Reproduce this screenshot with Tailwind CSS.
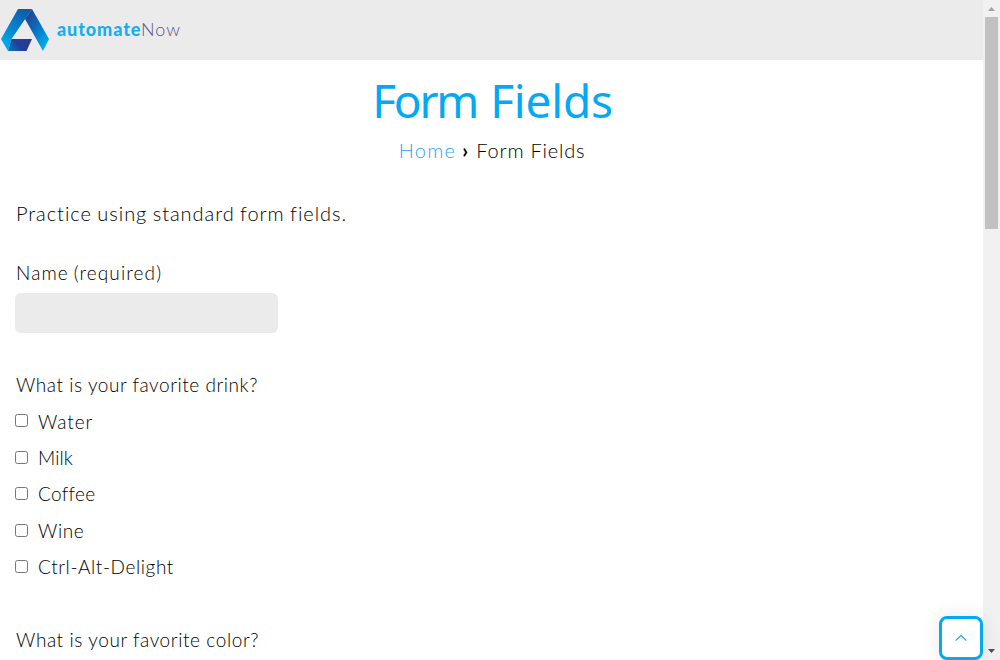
<!DOCTYPE html>
<html lang="en">
<head>
<meta charset="utf-8">
<title>Form Fields</title>
<script src="https://cdn.jsdelivr.net/npm/@tailwindcss/browser@4"></script>
</head>
<body class="flex h-[660px] w-[1000px] overflow-hidden bg-white font-['Lato',sans-serif] font-light text-black">
<div class="flex min-w-0 flex-1 flex-col">
  <header class="flex h-[60px] shrink-0 items-center bg-[#ebebeb]">
    <svg class="h-[60px] w-[50px] shrink-0" viewBox="0 0 50 60">
      <defs>
        <linearGradient id="l" x1="0.7" y1="0" x2="0.15" y2="1"><stop offset="0" stop-color="#0b5dab"/><stop offset=".5" stop-color="#0785cf"/><stop offset="1" stop-color="#00b4f2"/></linearGradient>
        <linearGradient id="r" x1="0.1" y1="0" x2="0.8" y2="1"><stop offset="0" stop-color="#2b3990"/><stop offset=".4" stop-color="#0b66b5"/><stop offset="1" stop-color="#00b4f5"/></linearGradient>
        <linearGradient id="b" x1="0" y1="0.7" x2="1" y2="0.3"><stop offset="0" stop-color="#0872bd"/><stop offset=".45" stop-color="#21409a"/><stop offset="1" stop-color="#2b3990"/></linearGradient>
      </defs>
      <path d="M18 9h14L11.500 39 8 51 1 39z" fill="url(#l)"/>
      <path d="M25 19l7-10 17 30-6 12z" fill="url(#r)"/>
      <path d="M11.500 39H32l-5.500 12H8z" fill="url(#b)"/>
    </svg>
    <div class="mt-[-2px] ml-[7px] flex text-[18px] leading-6 whitespace-nowrap"><span class="w-[84px] font-black tracking-[0.9px] text-[#15aeef]">automate</span><span class="tracking-[1px] text-[#55548a]">Now</span></div>
  </header>
  <main class="flex flex-col">
    <h1 class="mt-[10px] flex h-[60px] justify-center gap-[17px] pl-[2px] font-['Noto_Sans',sans-serif] text-[46px] leading-[60px] font-normal text-[#03a9f4]"><span class="w-[101px] tracking-[-2.200px]">Form</span><span class="tracking-[-0.2px]">Fields</span></h1>
    <nav class="mt-[5px] flex h-[30px] justify-center gap-[6px] pl-px text-[20px] leading-[30px] tracking-[0.8px]"><a class="tracking-[1.3px] text-[#2ea3f2]">Home</a><b class="w-[8px] font-bold">›</b><span>Form Fields</span></nav>
    <div class="flex flex-col pl-[15px]">
      <p class="mt-[33px] h-[30px] text-[20px] leading-[30px] tracking-[0.95px] [word-spacing:-0.9px]"><span class="pl-px">Practice using standard form fields.</span></p>
      <label class="mt-[30px] h-[30px] text-[19px] leading-[30px] tracking-[1.120px] [word-spacing:-1.5px]"><span class="pl-px">Name (required)</span></label>
      <input class="mt-[5px] h-[40px] w-[263px] rounded-[6px] bg-[#ebebeb]">
      <div class="mt-[37px] h-[30px] text-[19px] leading-[30px] tracking-[0.56px]"><span class="pl-px">What is your favorite drink?</span></div>
      <div class="mt-[4px] flex flex-col text-[19px] leading-[36.4px] tracking-[0.6px]">
        <label class="flex h-[36.4px]"><input type="checkbox" class="mt-[10.4px] mr-[10px] size-[13px]"><span class="-mt-[0.4px] tracking-[0.9px]">Water</span></label>
        <label class="flex h-[36.4px]"><input type="checkbox" class="mt-[10.4px] mr-[10px] size-[13px]"><span class="-mt-[0.4px] tracking-[0.1px]">Milk</span></label>
        <label class="flex h-[36.4px]"><input type="checkbox" class="mt-[10.4px] mr-[10px] size-[13px]"><span class="-mt-[0.4px] tracking-[0.35px]">Coffee</span></label>
        <label class="flex h-[36.4px]"><input type="checkbox" class="mt-[10.4px] mr-[10px] size-[13px]"><span class="-mt-[0.4px]">Wine</span></label>
        <label class="flex h-[36.4px]"><input type="checkbox" class="mt-[10.4px] mr-[10px] size-[13px]"><span class="-mt-[0.4px]">Ctrl-Alt-Delight</span></label>
      </div>
      <div class="mt-[39px] h-[30px] text-[19px] leading-[30px] tracking-[0.6px]"><span class="pl-px">What is your favorite color?</span></div>
    </div>
  </main>
</div>
<aside class="flex w-[17px] shrink-0 flex-col items-center bg-[#f1f1f1]">
  <svg class="h-[17px] w-[17px] shrink-0" viewBox="0 0 17 17"><path d="M5 11l3.500-4 3.500 4z" fill="#a3a3a3"/></svg>
  <div class="h-[212px] w-[13px] bg-[#c1c1c1]"></div>
  <svg class="mt-auto h-[17px] w-[17px] shrink-0" viewBox="0 0 17 17"><path d="M5 6h7l-3.500 4z" fill="#505050"/></svg>
</aside>
<button class="absolute top-[616px] left-[939px] flex size-[44px] items-center justify-center rounded-[8px] border-3 border-[#03a9f4] bg-white shadow-[0_0_20px_rgba(0,0,0,0.09)]">
  <svg class="size-[12px]" viewBox="0 0 12 12" fill="none" stroke="#03a9f4" stroke-width="1.100"><path d="M.7 8.700L6 3.400l5.300 5.300"/></svg>
</button>
</body>
</html>
